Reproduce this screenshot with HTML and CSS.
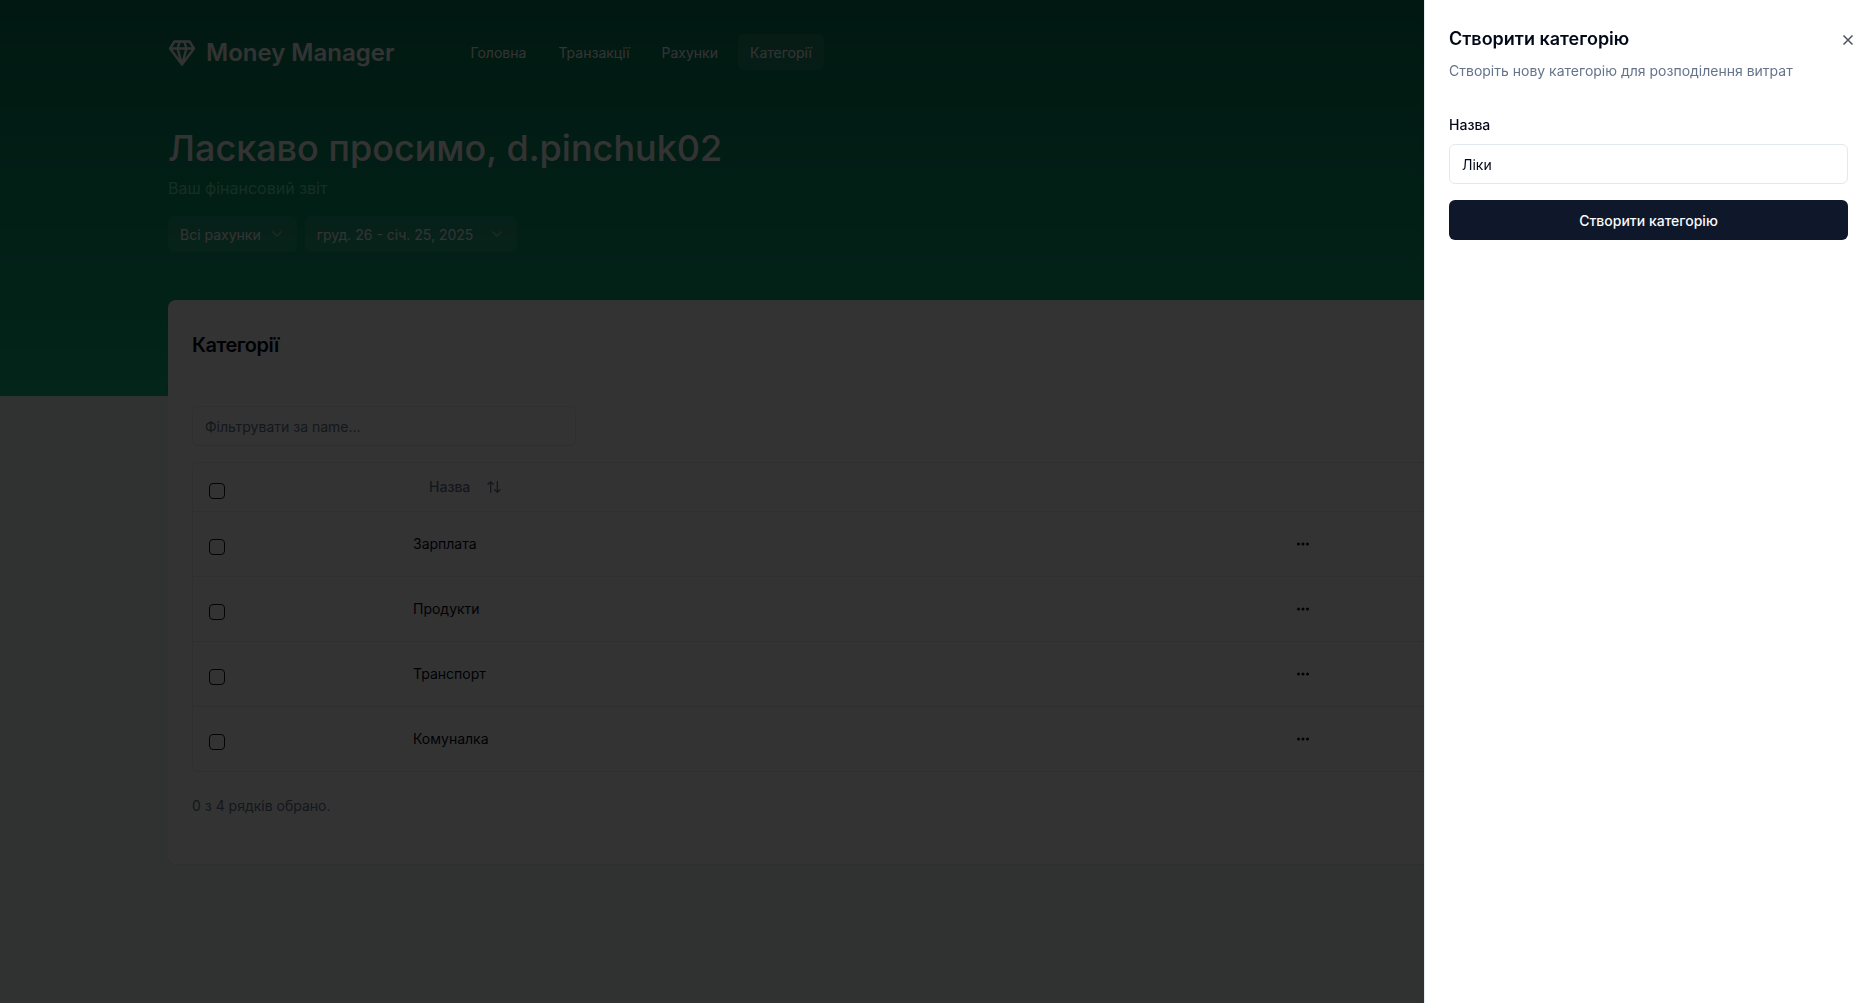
FILE: index.html
```html
<!DOCTYPE html>
<html lang="uk">
<head>
<meta charset="utf-8">
<meta name="viewport" content="width=device-width, initial-scale=1">
<title>Money Manager</title>
<link rel="stylesheet" href="styles.css">
</head>
<body>
<header class="site-header">
  <div class="container">
    <div class="topbar">
      <a class="brand" href="#">
        <svg class="brand-icon" viewBox="0 0 28 28" aria-hidden="true"><path d="M6.500 2.500h15L26 9.500 14 25.500 2 9.500zM2 9.500h24M11.800 2.500L9.500 9.500l4.500 16 4.500-16-2.300-7"/></svg>
        <span>Money Manager</span>
      </a>
      <nav class="nav">
        <a class="nav-link" href="#">Головна</a>
        <a class="nav-link" href="#">Транзакції</a>
        <a class="nav-link" href="#">Рахунки</a>
        <a class="nav-link active" href="#" aria-current="page">Категорії</a>
      </nav>
    </div>
    <div class="welcome">
      <h1>Ласкаво просимо, d.pinchuk02</h1>
      <p>Ваш фінансовий звіт</p>
    </div>
    <div class="filters">
      <button class="filter" type="button"><span>Всі рахунки</span><svg viewBox="0 0 16 16" aria-hidden="true"><path d="M3.500 5.500L8 10l4.500-4.500"/></svg></button>
      <button class="filter filter-date" type="button"><span>груд. 26 - січ. 25, 2025</span><svg viewBox="0 0 16 16" aria-hidden="true"><path d="M3.500 5.500L8 10l4.500-4.500"/></svg></button>
    </div>
  </div>
</header>
<main class="container main">
  <section class="card">
    <div class="card-header"><h2>Категорії</h2></div>
    <input class="input search" type="text" aria-label="Фільтрувати" placeholder="Фільтрувати за name...">
    <div class="table-wrap">
      <table>
        <colgroup><col class="col-check"><col class="col-name"><col></colgroup>
        <thead>
          <tr>
            <th class="check"><input type="checkbox" aria-label="Обрати всі"></th>
            <th><button class="sort" type="button">Назва<svg viewBox="0 0 24 24" aria-hidden="true"><path d="M3 8l4-4 4 4M7 4v16M21 16l-4 4-4-4M17 20V4"/></svg></button></th>
            <th></th>
          </tr>
        </thead>
        <tbody>
          <tr><td class="check"><input type="checkbox" aria-label="Зарплата"></td><td>Зарплата</td><td><button class="more" type="button" aria-label="Дії"><svg viewBox="0 0 16 16"><circle cx="3.500" cy="8" r="1.500"/><circle cx="8" cy="8" r="1.500"/><circle cx="12.500" cy="8" r="1.500"/></svg></button></td></tr>
          <tr><td class="check"><input type="checkbox" aria-label="Продукти"></td><td>Продукти</td><td><button class="more" type="button" aria-label="Дії"><svg viewBox="0 0 16 16"><circle cx="3.500" cy="8" r="1.500"/><circle cx="8" cy="8" r="1.500"/><circle cx="12.500" cy="8" r="1.500"/></svg></button></td></tr>
          <tr><td class="check"><input type="checkbox" aria-label="Транспорт"></td><td>Транспорт</td><td><button class="more" type="button" aria-label="Дії"><svg viewBox="0 0 16 16"><circle cx="3.500" cy="8" r="1.500"/><circle cx="8" cy="8" r="1.500"/><circle cx="12.500" cy="8" r="1.500"/></svg></button></td></tr>
          <tr><td class="check"><input type="checkbox" aria-label="Комуналка"></td><td>Комуналка</td><td><button class="more" type="button" aria-label="Дії"><svg viewBox="0 0 16 16"><circle cx="3.500" cy="8" r="1.500"/><circle cx="8" cy="8" r="1.500"/><circle cx="12.500" cy="8" r="1.500"/></svg></button></td></tr>
        </tbody>
      </table>
    </div>
    <p class="selected">0 з 4 рядків обрано.</p>
  </section>
</main>
<div class="overlay"></div>
<aside class="sheet" role="dialog" aria-labelledby="sheet-title">
  <h2 id="sheet-title">Створити категорію</h2>
  <p>Створіть нову категорію для розподілення витрат</p>
  <form>
    <label for="name">Назва</label>
    <input class="input" id="name" type="text" value="Ліки">
    <button class="submit" type="button">Створити категорію</button>
  </form>
  <button class="close" type="button" aria-label="Закрити"><svg viewBox="0 0 16 16"><path d="M3.500 3.500l9 9M12.500 3.500l-9 9"/></svg></button>
</aside>
</body>
</html>
```
FILE: styles.css
```css
*,
*::before,
*::after {
  box-sizing: border-box;
}

body {
  margin: 0;
  min-height: 100vh;
  background: #f0f7f4;
  color: #020817;
  font: 14px/20px Inter, sans-serif;
}

h1, h2, p {
  margin: 0;
}

button, input {
  font: inherit;
  color: inherit;
}

button {
  border: 0;
  padding: 0;
  background: none;
}

a {
  color: inherit;
  text-decoration: none;
}

svg {
  display: block;
  fill: none;
  stroke: currentColor;
}

.container {
  max-width: 1536px;
  margin: 0 auto;
}

.site-header {
  padding: 32px 56px 144px;
  background: linear-gradient(#047857, #10b981);
  color: #fff;
}

.topbar {
  display: flex;
  align-items: center;
  gap: 64px;
  height: 40px;
  margin-bottom: 56px;
}

.brand {
  display: flex;
  align-items: center;
  gap: 10px;
  padding-top: 2px;
  font-size: 24px;
  line-height: 32px;
  font-weight: 600;
}

.brand-icon {
  width: 28px;
  height: 28px;
  stroke-width: 2.4;
  stroke-linejoin: round;
}

.nav {
  display: flex;
  gap: 8px;
}

.nav-link {
  padding: 9px 12px 7px;
  border-radius: 6px;
}

.nav-link.active {
  background: rgba(255, 255, 255, 0.1);
}

.welcome {
  display: grid;
  gap: 8px;
  margin-bottom: 16px;
}

.welcome h1 {
  font-size: 36px;
  line-height: 40px;
  font-weight: 500;
}

.welcome p {
  font-size: 16px;
  line-height: 24px;
  color: #6ee7b7;
}

.filters {
  display: flex;
  gap: 8px;
}

.filter {
  display: flex;
  align-items: center;
  gap: 8px;
  height: 36px;
  padding: 0 12px;
  border-radius: 6px;
  background: rgba(255, 255, 255, 0.1);
}

.filter span {
  padding-top: 2px;
}

.filter-date {
  gap: 16px;
}

.filter svg {
  width: 16px;
  height: 16px;
  stroke-width: 1.3;
  opacity: 0.5;
}

.main {
  margin-top: -96px;
}

.card {
  padding: 24px;
  border-radius: 8px;
  background: #fff;
  box-shadow: 0 1px 2px rgba(0, 0, 0, 0.08);
}

.card-header {
  display: flex;
  align-items: center;
  height: 42px;
  margin-bottom: 40px;
}

.card-header h2 {
  font-size: 20px;
  line-height: 28px;
  font-weight: 600;
  letter-spacing: -0.025em;
}

.input {
  display: block;
  width: 100%;
  height: 40px;
  padding: 8px 12px;
  border: 1px solid #e2e8f0;
  border-radius: 6px;
  background: #fff;
}

.input::placeholder {
  color: #64748b;
  opacity: 1;
}

.search {
  max-width: 384px;
  margin-bottom: 16px;
}

.table-wrap {
  border: 1px solid #e2e8f0;
  border-radius: 6px;
}

table {
  width: 100%;
  table-layout: fixed;
  border-spacing: 0;
}

.col-check {
  width: 204px;
}

.col-name {
  width: 874px;
}

th, td {
  padding: 0 16px;
  border-bottom: 1px solid #e2e8f0;
  text-align: left;
}

th {
  height: 49px;
  color: #64748b;
  font-weight: 500;
}

td {
  height: 65px;
}

tbody tr:last-child td {
  height: 64px;
  border-bottom: 0;
}

th.check {
  padding-top: 7px;
}

td.check {
  padding-top: 5px;
}

.check input {
  appearance: none;
  display: block;
  width: 16px;
  height: 16px;
  margin: 0;
  border: 1px solid #0f172a;
  border-radius: 4px;
}

.sort {
  display: flex;
  align-items: center;
  gap: 16px;
  height: 40px;
  padding: 0 16px;
}

.sort svg {
  width: 16px;
  height: 16px;
  stroke-width: 2;
  stroke-linecap: round;
  stroke-linejoin: round;
}

.more {
  display: grid;
  place-items: center;
  width: 32px;
  height: 32px;
}

.more svg {
  width: 16px;
  height: 16px;
  fill: currentColor;
  stroke: none;
}

.selected {
  padding: 24px 0;
  color: #64748b;
}

.overlay {
  position: fixed;
  inset: 0;
  background: rgba(0, 0, 0, 0.8);
}

.sheet {
  position: fixed;
  top: 0;
  right: 0;
  bottom: 0;
  width: 75%;
  max-width: 448px;
  padding: 25px 24px 24px;
  border-left: 1px solid #e2e8f0;
  background: #fff;
  box-shadow: 0 10px 15px -3px rgba(0, 0, 0, 0.1), 0 4px 6px -4px rgba(0, 0, 0, 0.1);
}

.sheet h2 {
  margin-bottom: 8px;
  font-size: 18px;
  line-height: 28px;
  font-weight: 600;
}

.sheet p {
  margin-bottom: 32px;
  color: #64748b;
}

.sheet label {
  display: block;
  margin-bottom: 7px;
  line-height: 24px;
  font-weight: 500;
}

.submit {
  width: 100%;
  height: 40px;
  margin-top: 16px;
  padding-top: 2px;
  border-radius: 6px;
  background: #0f172a;
  color: #f8fafc;
  font-weight: 500;
}

.close {
  position: absolute;
  top: 32px;
  right: 16px;
  opacity: 0.7;
}

.close svg {
  width: 16px;
  height: 16px;
  stroke-width: 1.5;
}
```
